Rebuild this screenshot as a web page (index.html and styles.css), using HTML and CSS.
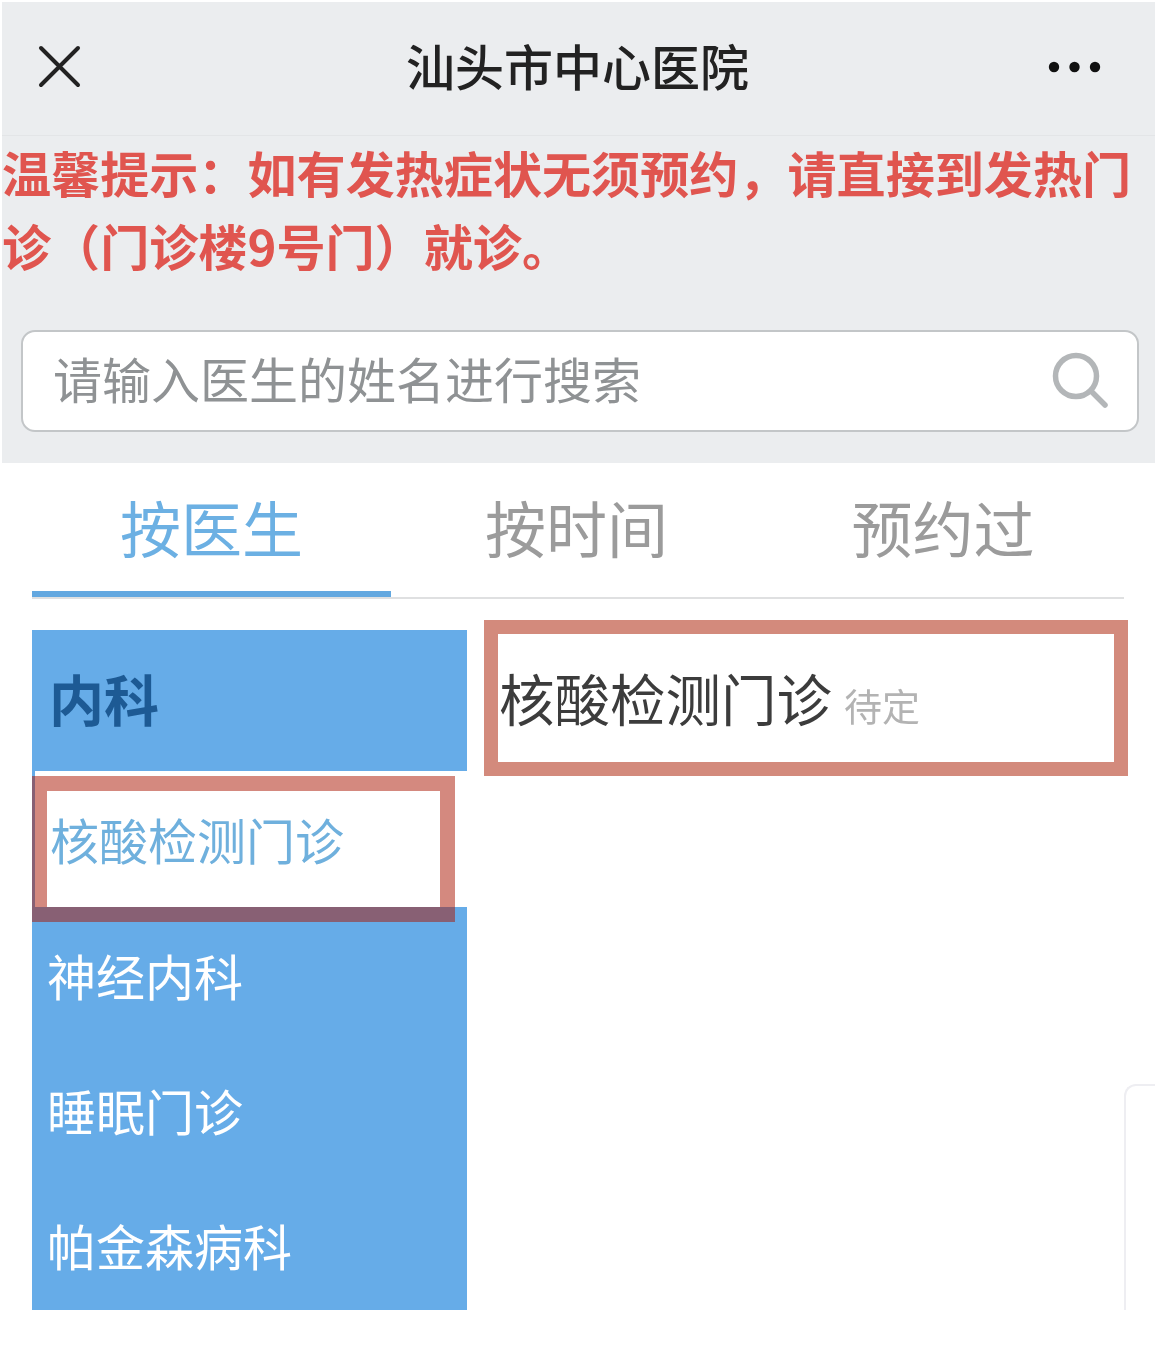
FILE: index.html
```html
<!DOCTYPE html>
<html lang="zh-CN">
<head>
    <meta charset="UTF-8">
    <meta name="viewport" content="width=device-width, initial-scale=1.0">
    <title>汕头市中心医院</title>
    <link rel="stylesheet" href="styles.css">
</head>
<body>
    <div class="page">
        <div class="top">
            <header class="nav-bar">
                <svg class="icon-close" width="46" height="46" viewBox="0 0 46 46">
                    <path d="M4 4L41 41M41 4L4 41" fill="none" stroke="#222" stroke-width="4" stroke-linecap="round"/>
                </svg>
                <h1>汕头市中心医院</h1>
                <svg class="icon-more" width="54" height="12" viewBox="0 0 54 12">
                    <circle cx="6" cy="6" r="5.2" fill="#111"/>
                    <circle cx="26.5" cy="6" r="5.2" fill="#111"/>
                    <circle cx="47" cy="6" r="5.2" fill="#111"/>
                </svg>
            </header>
            <p class="notice">温馨提示&#xFF1A;如有发热症状无须预约&#xFF0C;请直接到发热门诊&#xFF08;门诊楼9号门&#xFF09;就诊。</p>
            <div class="search">
                <span class="search-text">请输入医生的姓名进行搜索</span>
                <svg class="icon-search" width="58" height="58" viewBox="0 0 58 58">
                    <circle cx="24" cy="24" r="20.5" fill="none" stroke="#b3b6b8" stroke-width="5.5"/>
                    <path d="M39 39L53 53" fill="none" stroke="#b3b6b8" stroke-width="5.5" stroke-linecap="round"/>
                </svg>
            </div>
        </div>

        <div class="tabs">
            <div class="tab active">按医生</div>
            <div class="tab">按时间</div>
            <div class="tab">预约过</div>
        </div>

        <div class="content">
            <ul class="dept-list">
                <li class="dept-head">内科</li>
                <li class="dept-item selected">核酸检测门诊<span class="mark-left"></span></li>
                <li class="dept-item">神经内科</li>
                <li class="dept-item">睡眠门诊</li>
                <li class="dept-item">帕金森病科</li>
            </ul>
            <div class="clinic-panel">
                <div class="clinic-row">
                    <span class="clinic-name">核酸检测门诊</span>
                    <span class="clinic-status">待定</span>
                </div>
            </div>
        </div>
        <div class="float-card"></div>
    </div>
</body>
</html>
```

FILE: styles.css
```css
* {
    box-sizing: border-box;
}

body {
    margin: 0;
    background: #ffffff;
    font-family: "Noto Sans CJK SC", "Noto Sans", sans-serif;
}

/* the source is a soft, upscaled phone capture */
.page {
    position: relative;
    width: 1158px;
    height: 1350px;
    padding: 2px 3px 0 2px;
    overflow: hidden;
    filter: blur(0.6px);
}

.top {
    height: 461px;
    background: #ebedef;
}

.nav-bar {
    display: flex;
    justify-content: space-between;
    align-items: center;
    height: 134px;
    padding: 0 53px 4px 35px;
    border-bottom: 1px solid #e3e5e7;
}

.nav-bar h1 {
    margin: 0 0 4px 24px;
    font-size: 49px;
    font-weight: 500;
    color: #222;
}

.notice {
    margin: -1px 0 0;
    padding: 0 20px 0 0;
    font-size: 49.1px;
    font-weight: 700;
    line-height: 73px;
    color: #e0554f;
}

.search {
    display: flex;
    justify-content: space-between;
    align-items: center;
    height: 102px;
    margin: 49px 16px 0 19px;
    padding: 0 27px 0 30px;
    background: #ffffff;
    border: 2px solid #c3c6c8;
    border-radius: 14px;
}

.search-text {
    margin-bottom: 8px;
    font-size: 49px;
    color: #8f9294;
}

.tabs {
    display: grid;
    grid-template-columns: 359px 371px 362px;
    height: 136px;
    margin: 0 31px 0 30px;
    border-bottom: 2px solid #dfe0e1;
}

.tab {
    height: 134px;
    padding-top: 22px;
    font-size: 61px;
    line-height: 84px;
    text-align: center;
    color: #9b9b9b;
}

.tab.active {
    color: #6cb0e3;
    border-bottom: 6px solid #63a8e0;
}

.content {
    display: flex;
    gap: 17px;
    margin: 31px 27px 0 30px;
}

.dept-list {
    width: 435px;
    height: 680px;
    margin: 0;
    padding: 0;
    overflow: hidden;
    list-style: none;
    background: #66ace8;
}

.dept-head {
    height: 141px;
    padding-left: 17px;
    font-size: 55px;
    font-weight: 700;
    line-height: 135px;
    color: #1d5a94;
}

.dept-item {
    position: relative;
    height: 135px;
    padding-left: 15px;
    font-size: 49px;
    line-height: 135px;
    color: #ffffff;
}

.dept-item.selected {
    height: 136px;
    margin-left: 3px;
    background: #ffffff;
    color: #6fb0dd;
}

/* hand-drawn annotation frames on the screenshot */
.mark-left {
    position: absolute;
    top: 5px;
    left: -3px;
    width: 423px;
    height: 146px;
    border: 15px solid rgba(170, 20, 0, 0.5);
}

.clinic-panel {
    flex: 1;
    margin-top: -10px;
}

.clinic-row {
    display: flex;
    align-items: baseline;
    gap: 12px;
    height: 156px;
    padding: 23px 0 0 1px;
    border: 14px solid #d38a7c;
}

.clinic-name {
    font-size: 55.5px;
    color: #3c3c3c;
}

.clinic-status {
    font-size: 38px;
    color: #b3b3b3;
}

.float-card {
    position: absolute;
    top: 1084px;
    left: 1124px;
    width: 31px;
    height: 226px;
    border: 2px solid #eeeef2;
    border-width: 2px 0 0 2px;
    border-top-left-radius: 12px;
}
```
